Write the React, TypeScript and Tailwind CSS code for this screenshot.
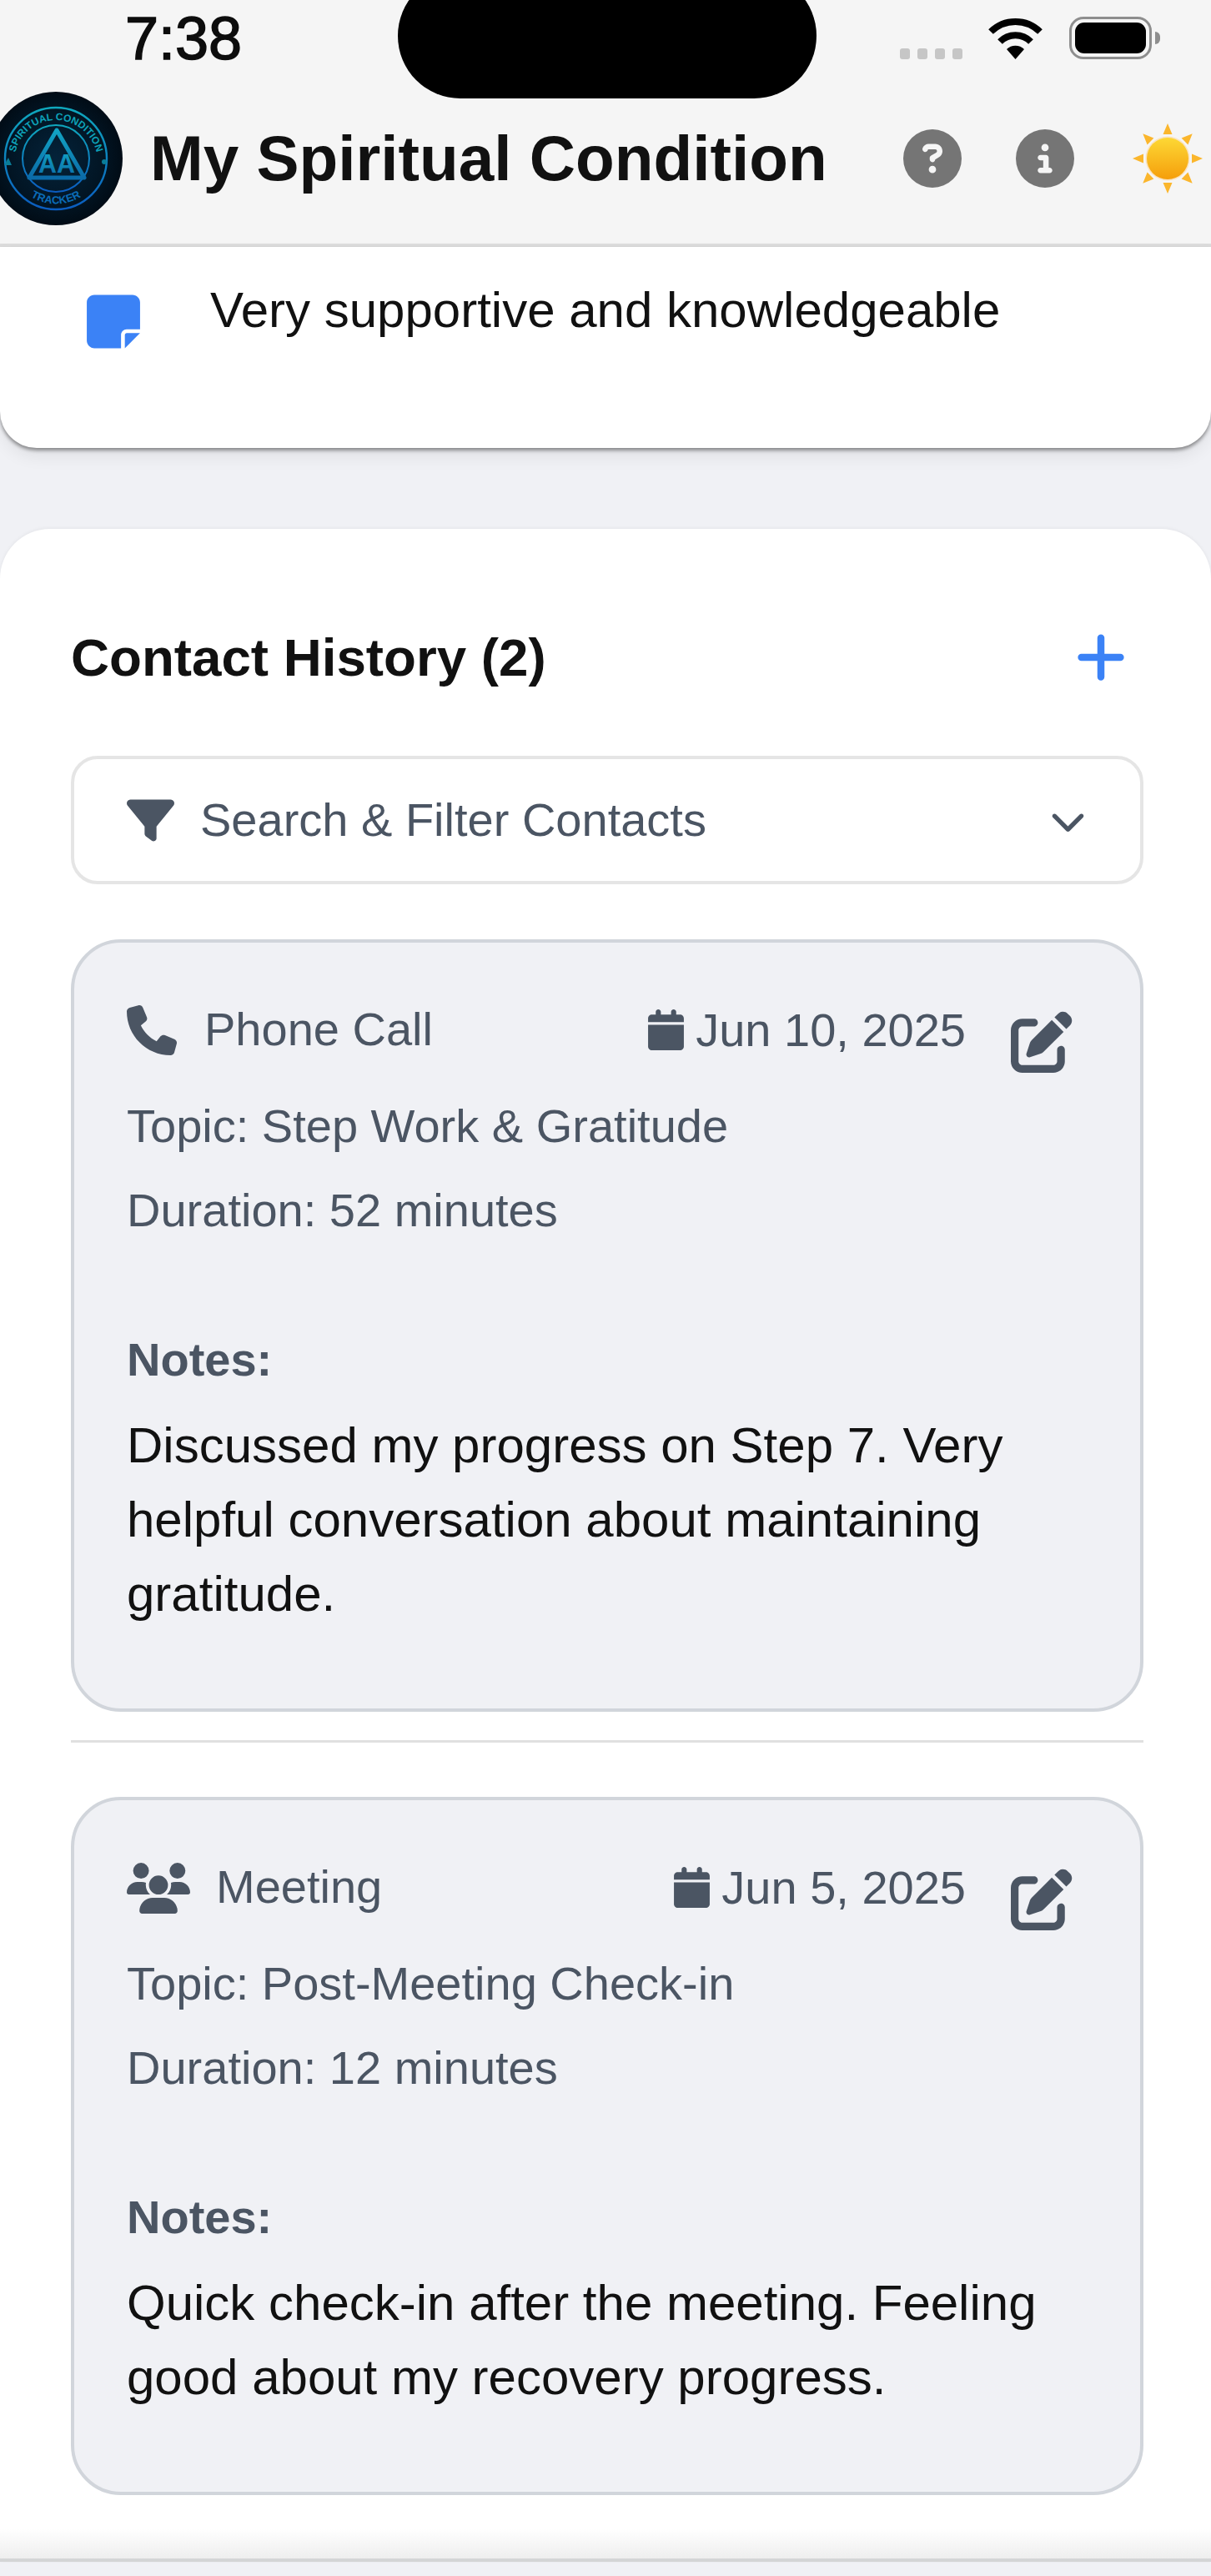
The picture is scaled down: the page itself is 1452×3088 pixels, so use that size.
import { FaChevronDown, FaCalendar, FaCircleInfo, FaCircleQuestion, FaFilter, FaNoteSticky, FaPenToSquare, FaPhone, FaPlus, FaUsers } from "react-icons/fa6";

const contacts = [
  {
    type: "Phone Call",
    date: "Jun 10, 2025",
    topic: "Step Work & Gratitude",
    duration: "52 minutes",
    notes: "Discussed my progress on Step 7. Very helpful conversation about maintaining gratitude.",
  },
  {
    type: "Meeting",
    date: "Jun 5, 2025",
    topic: "Post-Meeting Check-in",
    duration: "12 minutes",
    notes: "Quick check-in after the meeting. Feeling good about my recovery progress.",
  },
];

function Logo() {
  return (
    <svg viewBox="0 0 160 160" className="w-[160px] h-[160px] shrink-0 -ml-[13px]">
      <defs>
        <radialGradient id="logoBg" cx="50%" cy="50%" r="50%">
          <stop offset="0%" stopColor="#04233a" />
          <stop offset="70%" stopColor="#021524" />
          <stop offset="100%" stopColor="#010c16" />
        </radialGradient>
        <linearGradient id="logoRing" x1="0" y1="0" x2="0" y2="1">
          <stop offset="0%" stopColor="#0fa8bd" />
          <stop offset="100%" stopColor="#0b5cc0" />
        </linearGradient>
        <linearGradient id="logoMark" x1="0" y1="0" x2="0" y2="1">
          <stop offset="0%" stopColor="#12a4c4" />
          <stop offset="100%" stopColor="#0b6ba8" />
        </linearGradient>
        <path id="arcTop" d="M30 84 A50 50 0 0 1 130 84" />
        <path id="arcBottom" d="M24 88 A57 57 0 0 0 136 88" />
      </defs>
      <circle cx="80" cy="80" r="80" fill="url(#logoBg)" />
      <circle cx="80" cy="80" r="61" fill="none" stroke="url(#logoRing)" strokeWidth="2.4" />
      <circle cx="80" cy="80" r="40" fill="none" stroke="url(#logoRing)" strokeWidth="2" />
      <text fontSize="12" fontWeight="700" fill="#0da2b8" fontFamily="'Liberation Sans', sans-serif" textAnchor="middle">
        <textPath href="#arcTop" startOffset="50%">SPIRITUAL CONDITION</textPath>
      </text>
      <text fontSize="13" fontWeight="700" fill="#0b6cb8" fontFamily="'Liberation Sans', sans-serif" textAnchor="middle">
        <textPath href="#arcBottom" startOffset="50%">TRACKER</textPath>
      </text>
      <path d="M81 46 L114 103 L48 103 Z" fill="none" stroke="url(#logoMark)" strokeWidth="5" strokeLinejoin="round" />
      <text x="81" y="97" fontSize="31" fontWeight="700" fill="url(#logoMark)" fontFamily="'Liberation Sans', sans-serif" textAnchor="middle" textLength="44" lengthAdjust="spacingAndGlyphs">AA</text>
      <path d="M18 88 L23 79 L27 88 Z" fill="#0a7d98" />
      <circle cx="138" cy="84" r="3" fill="#0a7d98" />
    </svg>
  );
}

function Sun() {
  const rays = [0, 45, 90, 135, 180, 225, 270, 315];
  return (
    <svg viewBox="0 0 84 84" className="w-[84px] h-[84px] shrink-0">
      <defs>
        <linearGradient id="sunFill" x1="0" y1="0" x2="0" y2="1">
          <stop offset="0%" stopColor="#fdd835" />
          <stop offset="100%" stopColor="#f59e0b" />
        </linearGradient>
      </defs>
      {rays.map((r) => (
        <path key={r} d="M42 0 L47.5 13 L36.5 13 Z" fill="#fbb62c" transform={`rotate(${r} 42 42)`} />
      ))}
      <circle cx="42" cy="42" r="26.5" fill="#fbe3bd" />
      <circle cx="42" cy="42" r="25" fill="url(#sunFill)" />
    </svg>
  );
}

function StatusBar() {
  return (
    <div className="flex justify-between h-[110px]">
      <span className="pl-[150px] text-[72px] leading-[92px] text-[#0d0d0d] [-webkit-text-stroke:1.5px_#0d0d0d]">7:38</span>
      <div className="flex items-end h-[71px] pr-[61px]">
        <div className="flex gap-[9px] mr-[30px]">
          <span className="w-[12px] h-[13px] rounded-[3px] bg-[#c6c6c6]" />
          <span className="w-[12px] h-[13px] rounded-[3px] bg-[#c6c6c6]" />
          <span className="w-[12px] h-[13px] rounded-[3px] bg-[#c6c6c6]" />
          <span className="w-[12px] h-[13px] rounded-[3px] bg-[#c6c6c6]" />
        </div>
        <svg viewBox="0 0 67 50" className="w-[67px] h-[50px] mr-[31px]">
          <path d="M4 17 A42 42 0 0 1 63 17" fill="none" stroke="#000" strokeWidth="8" />
          <path d="M15 29 A26 26 0 0 1 52 29" fill="none" stroke="#000" strokeWidth="8" />
          <path d="M33.5 50 L23 38 A15 15 0 0 1 44 38 Z" fill="#000" />
        </svg>
        <div className="flex items-center gap-[4px]">
          <div className="w-[99px] h-[51px] rounded-[17px] border-[3px] border-[#8e8e8e] p-[4px]">
            <div className="w-full h-full rounded-[11px] bg-black" />
          </div>
          <span className="w-[6px] h-[15px] rounded-r-full bg-[#8e8e8e]" />
        </div>
      </div>
    </div>
  );
}

function ContactCard({ contact }: { contact: (typeof contacts)[number] }) {
  const isCall = contact.type === "Phone Call";
  return (
    <div className="rounded-[60px] border-4 border-[#d1d5db] bg-[#f0f1f5] pt-[71px] pb-[93px] pl-[63px] pr-[81px] text-[56px] leading-[77px] text-[#4b5563]">
      <div className="flex justify-between items-start h-[87px]">
        <div className="flex items-center gap-[31px] h-[64px]">
          {isCall ? <FaPhone className="w-[60px] h-[60px] mt-1 mr-[2px]" /> : <FaUsers className="w-[76px] h-[61px] mt-1" />}
          <span>{contact.type}</span>
        </div>
        <div className="flex items-start">
          <div className="flex items-center gap-[14px] h-[66px]">
            <FaCalendar className="w-[43px] h-[49px]" />
            <span>{contact.date}</span>
          </div>
          <button className="ml-[54px] mt-[11px] text-[#4b5563]">
            <FaPenToSquare className="w-[74px] h-[74px]" />
          </button>
        </div>
      </div>
      <p className="mt-[23px]">Topic: {contact.topic}</p>
      <p className="mt-[24px]">Duration: {contact.duration}</p>
      <p className="mt-[102px] font-bold">Notes:</p>
      <p className="mt-[20px] text-[60px] leading-[89px] text-[#111]">{contact.notes}</p>
    </div>
  );
}

export default function App() {
  return (
    <div className="relative h-[3088px] overflow-hidden bg-[#f0f1f5] font-['Liberation_Sans',Arial,sans-serif]">
      <header className="bg-[#f5f5f5] border-b-4 border-[#dcdcdc] h-[296px]">
        <StatusBar />
        <div className="flex items-center h-[160px] pr-[10px]">
          <Logo />
          <h1 className="ml-[33px] text-[76.5px] leading-none font-bold text-[#111]">My Spiritual Condition</h1>
          <div className="ml-auto flex items-center gap-[65px] text-[#757575]">
            <FaCircleQuestion className="w-[70px] h-[70px]" />
            <FaCircleInfo className="w-[70px] h-[70px]" />
            <div className="ml-[5px]">
              <Sun />
            </div>
          </div>
        </div>
      </header>

      <div className="absolute left-[477px] -top-[32px] w-[502px] h-[150px] rounded-full bg-black" />

      <section className="bg-white h-[241px] rounded-b-[44px] pt-[40px] pl-[104px] flex items-start gap-[84px] shadow-[0_3px_4px_rgba(0,0,0,0.4),0_10px_20px_rgba(0,0,0,0.07)]">
        <FaNoteSticky className="w-[64px] h-[73px] mt-[13px] shrink-0 text-[#3b82f6]" />
        <p className="text-[60px] leading-[72px] text-[#111]">Very supportive and knowledgeable</p>
      </section>

      <section className="mt-[97px] bg-white rounded-t-[60px] pt-[114px] pl-[85px] pr-[81px] shadow-[0_-1px_4px_rgba(0,0,0,0.05)]">
        <div className="flex items-center justify-between h-[80px] mb-[78px]">
          <h2 className="text-[63.7px] leading-none font-bold text-[#111]">Contact History (2)</h2>
          <button className="mr-[21px] text-[#3b82f6]">
            <FaPlus className="w-[60px] h-[68px]" />
          </button>
        </div>

        <div className="flex items-center h-[154px] mb-[66px] rounded-[32px] border-4 border-[#e5e5e5] bg-white pl-[63px] pr-[65px] text-[#4b5563]">
          <FaFilter className="w-[57px] h-[57px] mr-[31px]" />
          <span className="text-[56px] leading-none">Search &amp; Filter Contacts</span>
          <FaChevronDown className="ml-auto w-[43px] h-[43px]" />
        </div>

        <ContactCard contact={contacts[0]} />
        <div className="mt-[34px] mb-[65px] h-[3px] bg-[#e0e0e0]" />
        <ContactCard contact={contacts[1]} />

        <div className="-ml-[85px] -mr-[81px] mt-[41px] h-[39px] border-b-4 border-[#d4d5d6] bg-gradient-to-b from-white to-[#eeeeee]" />
      </section>
    </div>
  );
}
